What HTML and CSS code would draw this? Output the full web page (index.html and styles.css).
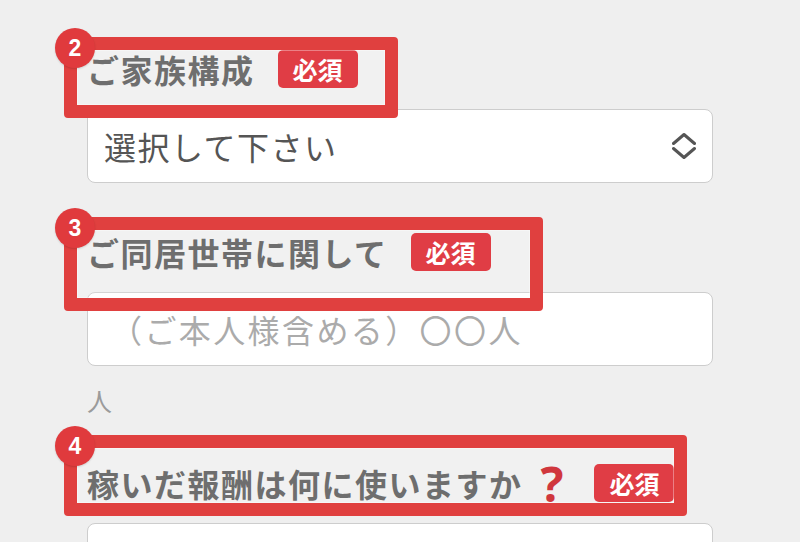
FILE: index.html
```html
<!DOCTYPE html>
<html lang="ja">
<head>
<meta charset="utf-8">
<title>フォーム</title>
<link rel="stylesheet" href="styles.css">
</head>
<body>
<div class="page">
  <div class="control prev"></div>

  <div class="field">
    <div class="label-row">
      <span class="label-text">ご家族構成</span>
      <span class="req">必須</span>
    </div>
    <div class="control select">
      <span class="select-text">選択して下さい</span>
      <svg class="chev" width="24" height="26" viewBox="0 0 24 26" aria-hidden="true">
        <polyline points="1.5,10.5 12,1.5 22.5,10.5" />
        <polyline points="1.5,15.5 12,24.5 22.5,15.5" />
      </svg>
    </div>
    <div class="mark mark-2"><span class="num">2</span></div>
  </div>

  <div class="field">
    <div class="label-row">
      <span class="label-text">ご同居世帯に関して</span>
      <span class="req">必須</span>
    </div>
    <input class="control text-input" type="text" placeholder="（ご本人様含める）〇〇人">
    <div class="helper">人</div>
    <div class="mark mark-3"><span class="num">3</span></div>
  </div>

  <div class="field">
    <div class="label-row">
      <span class="label-text">稼いだ報酬は何に使いますか</span>
      <span class="qmark">?</span>
      <span class="req req-after-q">必須</span>
    </div>
    <div class="control"></div>
    <div class="mark mark-4"><span class="num">4</span></div>
  </div>
</div>
</body>
</html>
```

FILE: styles.css
```css
html, body {
  margin: 0;
  padding: 0;
  background: #efefef;
  overflow: hidden;
}

body {
  font-family: "Noto Sans CJK JP", "Noto Sans", sans-serif;
  color: #555;
}

.page {
  padding: 0 87px;
}

.control {
  box-sizing: border-box;
  display: flex;
  align-items: center;
  width: 100%;
  height: 74px;
  background: #fff;
  border: 1.5px solid #cdcdcd;
  border-radius: 8px;
}

.prev {
  margin-top: -74px;
}

.field {
  position: relative;
  margin-top: 50px;
}

.label-row {
  display: flex;
  align-items: center;
  height: 38px;
  margin-bottom: 21px;
}

.label-text {
  font-size: 32px;
  font-weight: 700;
  letter-spacing: 1.5px;
  color: #555;
  line-height: 1;
  white-space: nowrap;
}

.req {
  display: inline-flex;
  align-items: center;
  justify-content: center;
  box-sizing: border-box;
  height: 38px;
  padding: 0 15px;
  margin-left: 23px;
  background: #db1c25;
  color: #fff;
  font-size: 25px;
  font-weight: 700;
  line-height: 1;
  border-radius: 5px;
}

.qmark {
  font-family: "Noto Sans", "DejaVu Sans", sans-serif;
  font-size: 48px;
  font-weight: 700;
  line-height: 1;
  color: #c8141c;
  margin-left: 18px;
  margin-top: 2px;
}

.req-after-q {
  margin-left: 31px;
}

.select {
  justify-content: space-between;
  padding: 0 16px 0 16px;
}

.select-text {
  font-size: 32px;
  letter-spacing: 1.5px;
  color: #555;
  line-height: 1;
}

.chev {
  display: block;
  margin-top: -1px;
}

.chev polyline {
  fill: none;
  stroke: #555;
  stroke-width: 3;
  stroke-linecap: round;
  stroke-linejoin: round;
}

.text-input {
  padding: 0 0 0 22px;
  font-family: "Noto Sans CJK JP", "Noto Sans", sans-serif;
  font-size: 32px;
  letter-spacing: 2.4px;
  color: #555;
  outline: none;
}

.text-input::placeholder {
  color: #ababab;
}

.helper {
  margin-top: 20px;
  font-size: 25px;
  line-height: 28px;
  color: #9b9b9b;
}

/* annotation frames drawn over the screenshot */
.mark {
  position: absolute;
  left: -23px;
  box-sizing: border-box;
  border: 13px solid #e0403f;
  border-radius: 4px;
  box-shadow: inset 0 0 0 1px rgba(255, 255, 255, 0.35);
  background: rgba(255, 255, 255, 0.15);
  pointer-events: none;
}

.mark-2 {
  top: -13px;
  width: 334px;
  height: 81px;
}

.mark-3 {
  top: -16px;
  width: 479px;
  height: 94px;
}

.mark-4 {
  top: -29px;
  width: 623px;
  height: 81px;
}

.num {
  position: absolute;
  left: -22px;
  top: -22px;
  width: 40px;
  height: 40px;
  border-radius: 50%;
  background: #e03a3d;
  color: #fff;
  font-family: "Liberation Sans", "Noto Sans", sans-serif;
  font-size: 23px;
  font-weight: 700;
  line-height: 40px;
  text-align: center;
  box-shadow: 0 1px 2px rgba(0, 0, 0, 0.15);
}
```
